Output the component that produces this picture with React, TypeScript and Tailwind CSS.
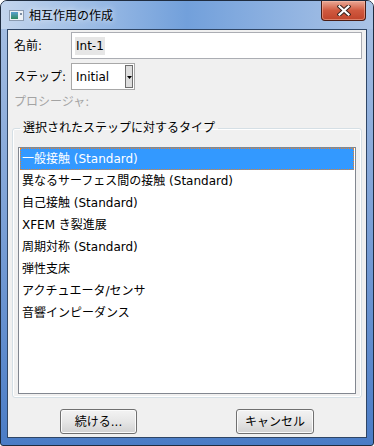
const items = [
  "一般接触 (Standard)",
  "異なるサーフェス間の接触 (Standard)",
  "自己接触 (Standard)",
  "XFEM き裂進展",
  "周期対称 (Standard)",
  "弾性支床",
  "アクチュエータ/センサ",
  "音響インピーダンス",
];

function WindowIcon() {
  return (
    <svg width="15" height="11" viewBox="0 0 15 11">
      <defs>
        <linearGradient id="ic" x1="0" y1="0" x2="0" y2="1">
          <stop offset="0" stopColor="#5aa0d0" />
          <stop offset="1" stopColor="#2f8a5e" />
        </linearGradient>
      </defs>
      <rect x="0.5" y="0.5" width="14" height="10" fill="#eef2f6" stroke="#8b9bb0" />
      <rect x="2" y="2" width="7" height="7" fill="url(#ic)" />
      <rect x="11" y="3" width="2" height="2" fill="#7d8ea4" />
    </svg>
  );
}

function CloseGlyph() {
  return (
    <svg width="14" height="11" viewBox="0 0 14 11">
      <path d="M2.5 1.5 L11.5 9.5 M11.5 1.5 L2.5 9.5" stroke="#3b2520" strokeWidth="4.2" strokeLinecap="square" />
      <path d="M2.5 1.5 L11.5 9.5 M11.5 1.5 L2.5 9.5" stroke="#ffffff" strokeWidth="2.2" strokeLinecap="square" />
    </svg>
  );
}

function Button({ label, w }: { label: string; w: string }) {
  return (
    <button
      className={`${w} h-[25px] rounded-[3px] border border-[#707070] bg-linear-to-b from-[#f3f3f3] via-[#e6e6e6] to-[#d2d2d2] shadow-[inset_0_0_0_1px_#fbfbfb] flex items-center justify-center text-[12px] leading-[16px] text-black`}
    >
      {label}
    </button>
  );
}

export default function App() {
  return (
    <div className="w-[374px] h-[446px] flex flex-col overflow-hidden rounded-t-[7px] rounded-b-[3px] border border-[#1f2c3f] bg-linear-to-b from-[#a9c1e3] via-[#7ba0d6] to-[#4a7cc6] text-[12px] leading-[16px] text-black font-['DejaVu_Sans','Noto_Sans_CJK_JP',sans-serif]">
      {/* title bar */}
      <div className="h-[28px] shrink-0 flex items-start justify-between bg-linear-to-r from-[#c3d5ed] via-[#72a0db] to-[#aac3e6]">
        <div className="flex items-center gap-[5px] pl-[8px] pt-[6px]">
          <WindowIcon />
          <span className="[text-shadow:0_0_6px_rgba(255,255,255,0.95)] font-['Noto_Sans_CJK_JP',sans-serif]">
            相互作用の作成
          </span>
        </div>
        <div className="mr-[7px] w-[45px] h-[20px] flex items-center justify-center rounded-b-[4px] border border-t-0 border-[#4a1c14] bg-linear-to-b from-[#e9a896] via-[#d0593f] to-[#c0442b] shadow-[inset_0_0_0_1px_rgba(255,200,180,0.45)]">
          <CloseGlyph />
        </div>
      </div>

      {/* body */}
      <div className="flex-1 flex px-[6px] pb-[7px]">
        <div className="flex-1 flex flex-col border border-[#2f4666] bg-[#f0f0f0]">
          <div className="flex items-center mt-[2px] pr-[4px]">
            <div className="w-[63px] pl-[6px]">名前:</div>
            <div className="flex-1 h-[27px] flex items-center border border-[#abadb3] bg-white">
              <span className="ml-[3px] px-[1px] py-[1px] bg-[#e6e6e6]">Int-1</span>
            </div>
          </div>

          <div className="flex items-center mt-[4px]">
            <div className="w-[63px] pl-[6px]">ステップ:</div>
            <div className="w-[64px] h-[27px] flex items-center border border-[#a8a8a8] bg-white">
              <span className="flex-1 pl-[4px]">Initial</span>
              <div className="w-[8px] h-[23px] mr-[1px] flex justify-center pt-[10px] border border-[#6e6e6e] bg-[#dedede]">
                <svg width="5" height="3" viewBox="0 0 5 3">
                  <path d="M0 0 H5 L2.5 3 Z" fill="#000" />
                </svg>
              </div>
            </div>
          </div>

          <div className="h-[22px] mt-[1px] flex items-center pl-[6px] text-[#a3a3a3]">プロシージャ:</div>

          <fieldset className="mx-[4px] mt-[7px] px-[5px] pb-[3px] rounded-[3px] border border-[#d5dfe5] shadow-[inset_0_0_0_1px_#ffffff]">
            <legend className="ml-[2px] px-[3px]">選択されたステップに対するタイプ</legend>
            <div className="mt-[11px] h-[247px] border border-[#828790] bg-white px-[1px]">
              {items.map((t, i) =>
                i === 0 ? (
                  <div
                    key={t}
                    className="h-[22px] flex items-center pl-[1px] border border-dotted border-[#e8822a] bg-[#3399ff] text-white"
                  >
                    {t}
                  </div>
                ) : (
                  <div key={t} className="h-[22px] flex items-center pl-[2px]">
                    {t}
                  </div>
                )
              )}
            </div>
          </fieldset>

          <div className="mt-[11px] flex pl-[52px] gap-[99px]">
            <Button label="続ける..." w="w-[77px]" />
            <Button label="キャンセル" w="w-[78px]" />
          </div>
        </div>
      </div>
    </div>
  );
}
